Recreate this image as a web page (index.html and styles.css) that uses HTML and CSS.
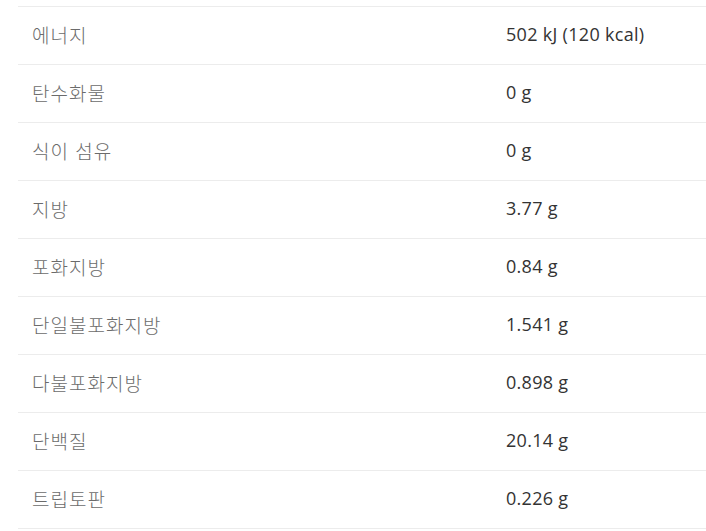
FILE: index.html
```html
<!DOCTYPE html>
<html lang="ko">
<head>
<meta charset="utf-8">
<link rel="stylesheet" href="styles.css">
</head>
<body>
<div class="wrap">
<table class="nutri">
<tbody>
<tr><td class="label">에너지</td><td class="value">502 kJ (120 kcal)</td></tr>
<tr><td class="label">탄수화물</td><td class="value">0 g</td></tr>
<tr><td class="label">식이 섬유</td><td class="value">0 g</td></tr>
<tr><td class="label">지방</td><td class="value">3.77 g</td></tr>
<tr><td class="label">포화지방</td><td class="value">0.84 g</td></tr>
<tr><td class="label">단일불포화지방</td><td class="value">1.541 g</td></tr>
<tr><td class="label">다불포화지방</td><td class="value">0.898 g</td></tr>
<tr><td class="label">단백질</td><td class="value">20.14 g</td></tr>
<tr><td class="label">트립토판</td><td class="value">0.226 g</td></tr>
</tbody>
</table>
</div>
</body>
</html>
```

FILE: styles.css
```css
html, body {
  margin: 0;
  padding: 0;
  background: #ffffff;
}
.wrap {
  padding: 6px 0 0 18px;
}
.nutri {
  width: 688px;
  border-collapse: collapse;
  font-family: "Open Sans", "Noto Sans CJK KR", sans-serif;
  font-size: 18px;
}
.nutri tr {
  border-top: 1px solid #ececec;
  border-bottom: 1px solid #ececec;
}
.nutri td {
  height: 58px;
  padding: 0 14px 3px 14px;
  vertical-align: middle;
  box-sizing: border-box;
}
.label {
  width: 474px;
  color: #6b6b6b;
  font-family: "Noto Sans CJK KR", sans-serif;
  font-size: 19px;
  font-weight: 300;
  letter-spacing: 1px;
}
.value {
  color: #333333;
  letter-spacing: 0.3px;
}
```
